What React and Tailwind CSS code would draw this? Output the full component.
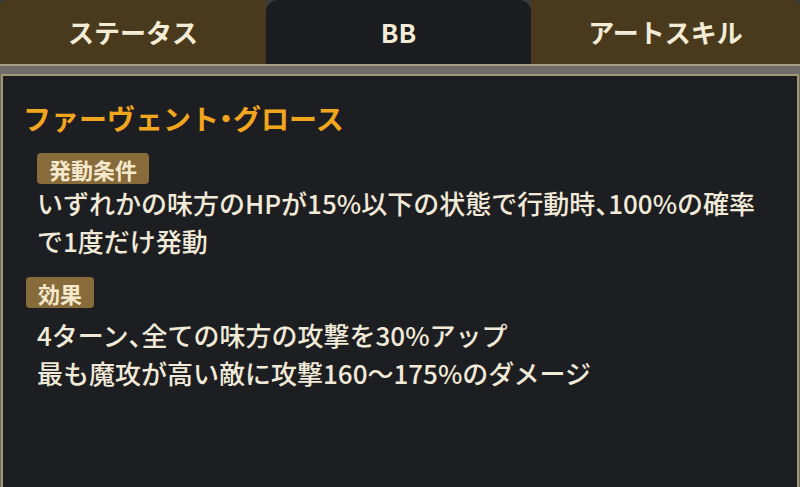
import React from 'react';

const tabs = [
  { label: 'ステータス', active: false, width: 'w-[266px]', corner: 'rounded-tl-[8px]' },
  { label: 'BB', active: true, width: 'w-[265px]', corner: 'rounded-t-[12px]' },
  { label: 'アートスキル', active: false, width: 'flex-1', corner: 'rounded-tr-[8px]' },
];

// half-width punctuation (、 ・) like the game font
const Half = ({ children }) => (
  <span className="[font-feature-settings:'halt']">{children}</span>
);

const Badge = ({ children }) => (
  <div className="inline-flex h-[31px] items-center rounded-[4px] bg-[#886b3b] px-3 text-[22px] font-bold leading-none text-[#f4e9cc]">
    {children}
  </div>
);

const App = () => {
  return (
    <div
      className="flex h-[487px] w-[800px] flex-col overflow-hidden bg-[#6d6b67]"
      style={{ fontFamily: '"Noto Sans CJK JP", "Noto Sans", sans-serif' }}
    >
      {/* Tabs */}
      <div className="flex h-[64px] bg-[#3a3a38]">
        {tabs.map((tab) => (
          <div
            key={tab.label}
            className={`${tab.width} ${tab.corner} flex items-center justify-center pb-[2px] text-[26px] font-bold text-[#f3ecd6] ${
              tab.active ? 'bg-[#1c1d21]' : 'bg-[#4a3a1d]'
            }`}
          >
            {tab.label}
          </div>
        ))}
      </div>

      {/* strip under the tabs */}
      <div className="h-[2px] bg-[#a89d82]" />
      <div className="h-[8px] bg-[#6f6d69]" />

      {/* Panel */}
      <div className="mx-[1px] flex-1 border-x-2 border-t-2 border-[#a39779] bg-[#1d1e22] pt-[24px] text-[#f1ead8]">
        <h2 className="pl-[20px] text-[28px] font-bold leading-[36px] text-[#f2a61e]">
          ファーヴェント<Half>・</Half>グロース
        </h2>

        <div className="mt-[17px] pl-[34px]">
          <Badge>発動条件</Badge>
          <p className="mt-0 text-[26px] font-medium leading-[38px]">
            いずれかの味方のHPが15%以下の状態で行動時<Half>、</Half>100%の確率
            <br />
            で1度だけ発動
          </p>
        </div>

        <div className="mt-[17px] pl-[23px]">
          <Badge>効果</Badge>
        </div>
        <p className="mt-[8px] pl-[34px] text-[26px] font-medium leading-[38px]">
          4ターン<Half>、</Half>全ての味方の攻撃を30%アップ
          <br />
          最も魔攻が高い敵に攻撃160～175%のダメージ
        </p>
      </div>
    </div>
  );
};

export default App;
